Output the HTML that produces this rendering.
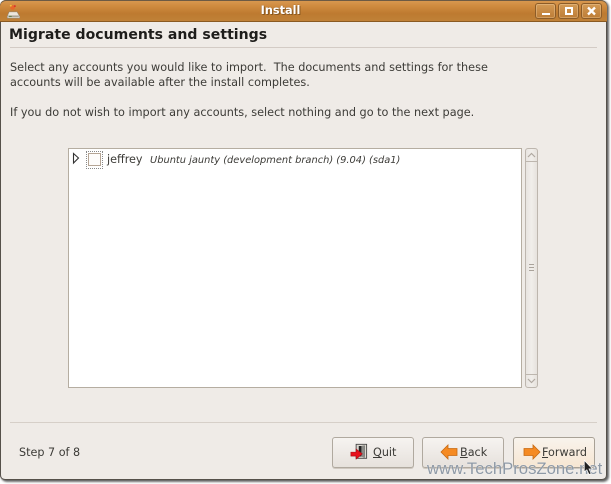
<!DOCTYPE html>
<html><head><meta charset="utf-8">
<style>
html,body{margin:0;padding:0;background:#fff;}
body{width:611px;height:484px;position:relative;overflow:hidden;font-family:"DejaVu Sans",sans-serif;color:#3c3b37;}
.a{position:absolute;white-space:nowrap;}
.win{position:absolute;left:0;top:0;width:607px;height:480px;background:#efebe7;border-radius:6px 6px 5px 5px;box-shadow:inset 1px 0 0 #55504a,inset -1px 0 0 #55504a,inset 0 -1px 0 #55504a,1px 1px 2px #555,2px 2px 2px #999;}
.blur{filter:blur(.3px);}
.title{position:absolute;left:0;top:0;width:607px;height:22px;background:linear-gradient(#d99a52 0,#cf8a3e 30%,#bd7a30 65%,#c08238 100%);border-radius:6px 6px 0 0;border-bottom:1px solid #8a5a22;box-sizing:border-box;box-shadow:inset 0 1px 0 #6d5a44;}
.wb{position:absolute;top:3px;width:21px;height:16px;box-sizing:border-box;border:1px solid #8c5c28;border-radius:3px;background:linear-gradient(#d39a55,#bd7d36);box-shadow:inset 0 0 0 1px rgba(255,230,190,.3);}
.hr{position:absolute;height:1px;background:#d3cbc5;left:10px;width:587px;}
.btn{position:absolute;top:437px;width:82px;height:31px;box-sizing:border-box;border:1px solid #b0a99f;border-radius:3px;background:linear-gradient(#f6f3f0,#e6e1dc);box-shadow:0 1px 0 #cfc8c0;font-size:11.2px;color:#3c3b37;}
.btn span{position:absolute;top:8px;}
u{text-decoration:underline;}
</style></head>
<body>
<div class="win blur">
<div class="title"></div>
<svg class="a" style="left:6px;top:3px" width="15" height="16" viewBox="0 0 16 18">
<circle cx="7" cy="5" r="2.6" fill="#e8672a"/><circle cx="5" cy="3" r="1.1" fill="#f0c040"/><circle cx="9.5" cy="3.5" r="1.1" fill="#d9342a"/>
<path d="M3 10 H12 L15 15 V17 H1 V15 Z" fill="#ece7dc" stroke="#8b8272" stroke-width=".6"/>
<rect x="2" y="14" width="12" height="2" fill="#a9a396"/><rect x="3" y="14.5" width="3" height="1" fill="#4e7a35"/>
</svg>
<div class="a" style="left:0;width:561px;text-align:center;top:3px;line-height:15px;font-size:11.3px;font-weight:bold;color:#fff;text-shadow:0 0 1px #7a4c18,1px 1px 0 #8a5a22;">Install</div>
<div class="wb" style="left:535px"><div class="a" style="left:6px;top:9px;width:8px;height:2px;background:#fff"></div></div>
<div class="wb" style="left:558px"><div class="a" style="left:6px;top:3px;width:4px;height:4px;border:2px solid #fff"></div></div>
<div class="wb" style="left:581px"><svg class="a" style="left:4px;top:2px" width="11" height="10" viewBox="0 0 11 10"><path d="M2 1.5 L9 8.5 M9 1.5 L2 8.5" stroke="#fff" stroke-width="2.3"/></svg></div>

<div class="a" style="left:9px;top:25px;line-height:20px;font-size:14.05px;font-weight:bold;color:#1e1d1b;letter-spacing:.02px;">Migrate documents and settings</div>
<div class="hr" style="top:47px"></div>
<div class="a" style="left:10px;top:60px;line-height:15px;font-size:11.25px;white-space:pre;">Select any accounts you would like to import.  The documents and settings for these
accounts will be available after the install completes.</div>
<div class="a" style="left:10px;top:105px;line-height:15px;font-size:11.25px;">If you do not wish to import any accounts, select nothing and go to the next page.</div>

<div class="a" style="left:68px;top:148px;width:454px;height:240px;box-sizing:border-box;background:#fff;border:1px solid #b5ada1;"></div>
<svg class="a" style="left:72px;top:152px" width="8" height="13" viewBox="0 0 8 13"><path d="M1.5 1.5 L6.5 6 L1.5 11 Z" fill="#fff" stroke="#333" stroke-width="1.1"/></svg>
<div class="a" style="left:86px;top:151px;width:17px;height:18px;box-sizing:border-box;border:1px dotted #888;"></div>
<div class="a" style="left:88px;top:153px;width:13px;height:13px;box-sizing:border-box;border:1px solid #b5a595;background:#fdfcfb;"></div>
<div class="a" style="left:107px;top:151px;font-size:11.2px;line-height:18px;">jeffrey</div>
<div class="a" style="left:150px;top:152px;font-size:9.85px;line-height:18px;font-style:italic;">Ubuntu jaunty (development branch) (9.04) (sda1)</div>

<div class="a" style="left:525px;top:148px;width:13px;height:240px;box-sizing:border-box;border:1px solid #bdb6ae;border-radius:3px;background:linear-gradient(90deg,#e8e4e0,#f1eeeb 50%,#e6e2dd);"></div>
<div class="a" style="left:525px;top:161px;width:13px;height:1px;background:#bdb6ae"></div>
<div class="a" style="left:525px;top:374px;width:13px;height:1px;background:#bdb6ae"></div>
<svg class="a" style="left:527px;top:152px" width="9" height="6" viewBox="0 0 9 6"><path d="M1 5 L4.5 1.5 L8 5" fill="none" stroke="#b0a9a1" stroke-width="1.2"/></svg>
<svg class="a" style="left:527px;top:378px" width="9" height="6" viewBox="0 0 9 6"><path d="M1 1 L4.5 4.5 L8 1" fill="none" stroke="#b0a9a1" stroke-width="1.2"/></svg>
<div class="a" style="left:529px;top:264px;width:5px;height:7px;background:repeating-linear-gradient(#aaa39b 0,#aaa39b 1px,transparent 1px,transparent 3px);"></div>

<div class="hr" style="top:422px;background:#d6cfc8"></div>
<div class="a" style="left:19px;top:444px;font-size:11.2px;line-height:18px;">Step 7 of 8</div>

<div class="btn" style="left:332px"><svg class="a" style="left:17px;top:5px" width="21" height="20" viewBox="0 0 24 22">
<path d="M7 1 H19 V17 H7 Z" fill="#dcd8d0" stroke="#444" stroke-width="1"/><path d="M10 3 H17 V15 H10 Z" fill="#222"/><path d="M13 3 L17 2 V17 L13 15 Z" fill="#8a8a86"/>
<path d="M1 10 H7 V6.5 L14 12 L7 18 V14.5 H1 Z" fill="#e8101c" stroke="#a60a12" stroke-width=".7"/></svg><span style="left:40px"><u>Q</u>uit</span></div>
<div class="btn" style="left:422px"><svg class="a" style="left:17px;top:6px" width="18" height="16" viewBox="0 0 18 16"><path d="M1 8 L8 1 V4.5 H17 V11.5 H8 V15 Z" fill="#f58a22" stroke="#c76a12" stroke-width=".8"/></svg><span style="left:37px"><u>B</u>ack</span></div>
<div class="btn" style="left:513px;background:linear-gradient(#f8f3ec,#f7e6d2);border-color:#a8a196;"><svg class="a" style="left:9px;top:6px" width="18" height="16" viewBox="0 0 18 16"><path d="M17 8 L10 1 V4.5 H1 V11.5 H10 V15 Z" fill="#f58a22" stroke="#c76a12" stroke-width=".8"/></svg><span style="left:28px"><u>F</u>orward</span></div>
</div>
<div class="a" style="left:427px;top:459px;font-family:'Liberation Sans',sans-serif;font-size:16.7px;line-height:20px;color:#8e99a6;text-shadow:0 0 1px #fff;">www.TechProsZone.net</div>
<svg class="a" style="left:583px;top:459px" width="12" height="19" viewBox="0 0 14 22"><path d="M1.5 1.5 V15 L4.5 12.5 L7 18 L9.5 17 L7 11.5 H11 Z" fill="#222" stroke="#fff" stroke-width=".8"/></svg>
</body></html>
